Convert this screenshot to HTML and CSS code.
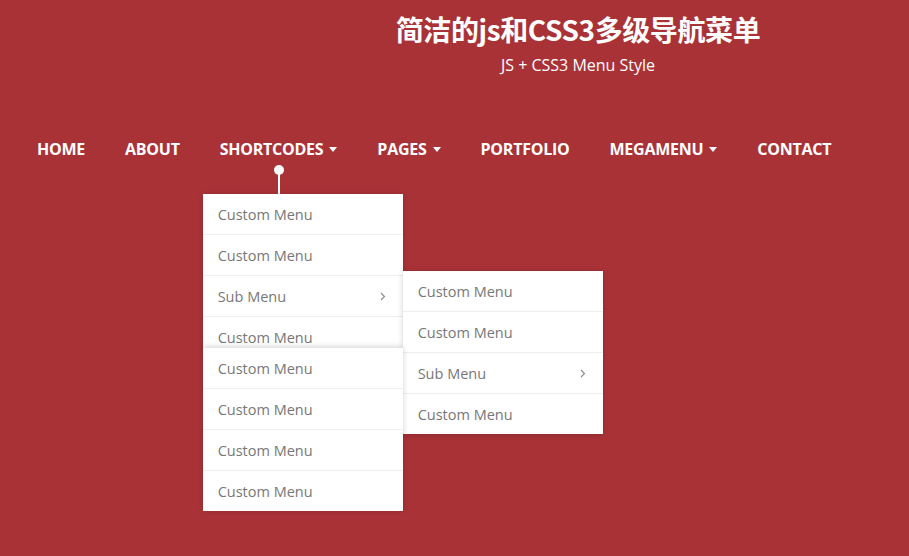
FILE: index.html
```html
<!DOCTYPE html>
<html lang="zh-CN">
<head>
    <meta charset="UTF-8">
    <meta name="viewport" content="width=device-width, initial-scale=1.0">
    <title>简洁的js和CSS3多级导航菜单</title>
    <link rel="stylesheet" href="styles.css">
</head>
<body>

    <header class="page-header">
        <h1>简洁的js和CSS3多级导航菜单</h1>
        <p>JS + CSS3 Menu Style</p>
    </header>

    <nav class="main-nav">
        <ul class="nav-list">
            <li><a href="#">Home</a></li>
            <li><a href="#">About</a></li>
            <li class="has-drop open">
                <a href="#">Shortcodes <span class="caret"></span></a>
                <span class="pin"></span>

                <ul class="drop drop-first">
                    <li><a href="#">Custom Menu</a></li>
                    <li><a href="#">Custom Menu</a></li>
                    <li class="has-sub">
                        <a href="#">Sub Menu
                            <svg class="chev" width="6" height="9" viewBox="0 0 6 9"><polyline points="1,1 4.5,4.5 1,8" fill="none" stroke="#888" stroke-width="1.1"/></svg>
                        </a>
                    </li>
                    <li><a href="#">Custom Menu</a></li>
                </ul>

                <ul class="drop drop-second">
                    <li><a href="#">Custom Menu</a></li>
                    <li><a href="#">Custom Menu</a></li>
                    <li class="has-sub">
                        <a href="#">Sub Menu
                            <svg class="chev" width="6" height="9" viewBox="0 0 6 9"><polyline points="1,1 4.5,4.5 1,8" fill="none" stroke="#888" stroke-width="1.1"/></svg>
                        </a>
                    </li>
                    <li><a href="#">Custom Menu</a></li>
                </ul>

                <!-- third level flips back to the left edge -->
                <ul class="drop drop-third">
                    <li><a href="#">Custom Menu</a></li>
                    <li><a href="#">Custom Menu</a></li>
                    <li><a href="#">Custom Menu</a></li>
                    <li><a href="#">Custom Menu</a></li>
                </ul>
            </li>
            <li class="has-drop"><a href="#">Pages <span class="caret"></span></a></li>
            <li><a href="#">Portfolio</a></li>
            <li class="has-drop"><a href="#">Megamenu <span class="caret"></span></a></li>
            <li><a href="#">Contact</a></li>
        </ul>
    </nav>

</body>
</html>
```

FILE: styles.css
```css
* {
    box-sizing: border-box;
    margin: 0;
    padding: 0;
}
body {
    background-color: #a93237;
    font-family: 'Open Sans', 'Noto Sans CJK SC', sans-serif;
    height: 100vh;
    overflow: hidden;
}
.page-header {
    padding: 8px 0 0 247px;
    text-align: center;
    color: #fff;
}
.page-header h1 {
    font-size: 28px;
    line-height: 42px;
    font-weight: bold;
    font-family: 'Noto Sans CJK SC', sans-serif;
    letter-spacing: -0.4px;
}
.page-header p {
    font-size: 16px;
    line-height: 24px;
    margin-top: 3px;
}
.main-nav {
    margin-top: 62px;
}
.nav-list {
    list-style: none;
    display: flex;
    padding-left: 17px;
}
.nav-list > li {
    position: relative;
}
.nav-list > li > a {
    display: flex;
    align-items: center;
    height: 20px;
    padding: 0 20px;
    color: #fff;
    text-decoration: none;
    text-transform: uppercase;
    font-weight: bold;
    font-size: 16px;
    letter-spacing: -0.25px;
}
.caret {
    display: inline-block;
    margin-left: 6px;
    border-left: 4.5px solid transparent;
    border-right: 4.5px solid transparent;
    border-top: 5px solid #fff;
}
.pin {
    position: absolute;
    left: 50%;
    top: 27px;
    width: 2px;
    height: 28px;
    margin-left: -1px;
    background-color: #fff;
}
.pin::before {
    content: '';
    position: absolute;
    left: -4px;
    top: -1px;
    width: 10px;
    height: 10px;
    border-radius: 50%;
    background-color: #fff;
}
.drop {
    position: absolute;
    list-style: none;
    width: 200px;
    background-color: #fff;
    box-shadow: 0 1px 6px rgba(0, 0, 0, 0.18);
}
.drop li {
    border-bottom: 1px solid #eee;
}
.drop li:last-child {
    border-bottom: none;
}
.drop a {
    display: flex;
    align-items: center;
    justify-content: space-between;
    height: 40px;
    padding: 0 15px;
    color: #777;
    text-decoration: none;
    font-size: 14.5px;
}
.chev {
    margin-right: 2px;
}
.drop-first {
    left: 3px;
    top: 55px;
    height: 154px;
    overflow: hidden;
}
.drop-second {
    left: 203px;
    top: 132px;
}
.drop-third {
    left: 3px;
    top: 209px;
    box-shadow: 0 -1px 6px rgba(0, 0, 0, 0.18);
}
```
